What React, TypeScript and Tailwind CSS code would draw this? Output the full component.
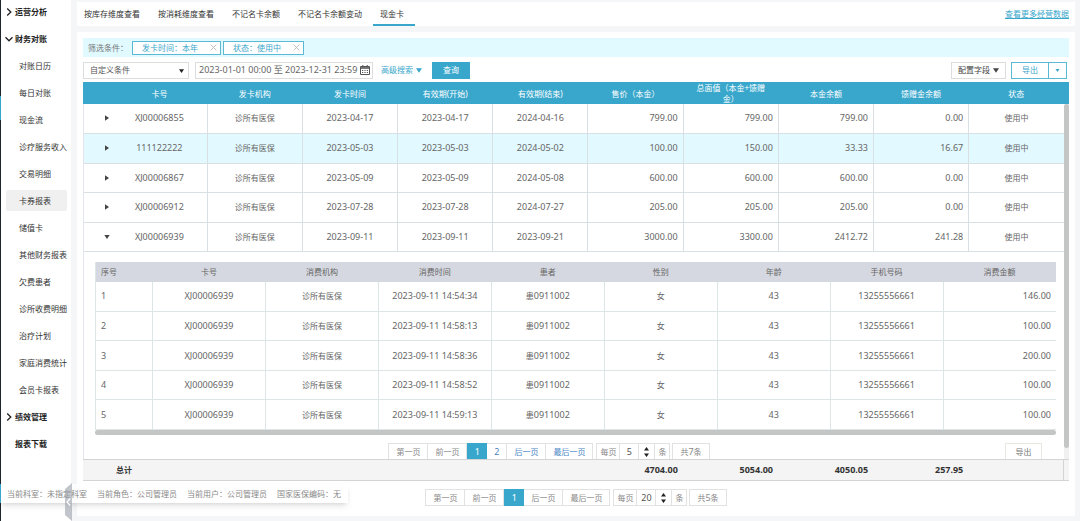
import React from "react";

interface CardRow {
  cardNo: string;
  issued: string;
  start: string;
  end: string;
  price: string;
  faceValue: string;
  principal: string;
  gift: string;
  active?: boolean;
  expanded?: boolean;
}

const cards: CardRow[] = [
  { cardNo: "XJ00006855", issued: "2023-04-17", start: "2023-04-17", end: "2024-04-16", price: "799.00", faceValue: "799.00", principal: "799.00", gift: "0.00" },
  { cardNo: "111122222", issued: "2023-05-03", start: "2023-05-03", end: "2024-05-02", price: "100.00", faceValue: "150.00", principal: "33.33", gift: "16.67", active: true },
  { cardNo: "XJ00006867", issued: "2023-05-09", start: "2023-05-09", end: "2024-05-08", price: "600.00", faceValue: "600.00", principal: "600.00", gift: "0.00" },
  { cardNo: "XJ00006912", issued: "2023-07-28", start: "2023-07-28", end: "2024-07-27", price: "205.00", faceValue: "205.00", principal: "205.00", gift: "0.00" },
  { cardNo: "XJ00006939", issued: "2023-09-11", start: "2023-09-11", end: "2023-09-21", price: "3000.00", faceValue: "3300.00", principal: "2412.72", gift: "241.28", expanded: true },
];

const records = [
  { time: "2023-09-11 14:54:34", amount: "146.00" },
  { time: "2023-09-11 14:58:13", amount: "100.00" },
  { time: "2023-09-11 14:58:36", amount: "200.00" },
  { time: "2023-09-11 14:58:52", amount: "100.00" },
  { time: "2023-09-11 14:59:13", amount: "100.00" },
];

const cardHeads = [
  "卡号",
  "发卡机构",
  "发卡时间",
  "有效期(开始)",
  "有效期(结束)",
  "售价（本金）",
  "总面值（本金+馈赠金）",
  "本金余额",
  "馈赠金余额",
  "状态",
];

const recordHeads = ["卡号", "消费机构", "消费时间", "患者", "性别", "年龄", "手机号码", "消费金额"];

const menu = [
  { title: "运营分析", arrow: "right", items: [] },
  {
    title: "财务对账",
    arrow: "down",
    items: [
      "对账日历",
      "每日对账",
      "现金流",
      "诊疗服务收入",
      "交易明细",
      "卡券报表",
      "储值卡",
      "其他财务报表",
      "欠费患者",
      "诊所收费明细",
      "治疗计划",
      "家庭消费统计",
      "会员卡报表",
    ],
  },
  { title: "绩效管理", arrow: "right", items: [] },
  { title: "报表下载", arrow: "", items: [] },
];

const tabs = ["按库存维度查看", "按消耗维度查看", "不记名卡余额", "不记名卡余额变动", "现金卡"];

function Caret({ className }: { className: string }) {
  return (
    <svg viewBox="0 0 8 6" className={className} fill="currentColor" aria-hidden="true">
      <path d="M0 0h8L4 6z" />
    </svg>
  );
}

function Chevron({ dir }: { dir: string }) {
  return (
    <svg viewBox="0 0 8 8" className="h-2 w-2" fill="none" stroke="#222" strokeWidth="1.3" aria-hidden="true">
      {dir === "right" ? <path d="M2.2 0.5 5.8 4 2.2 7.5" /> : <path d="M0.5 2.2 4 5.8 7.5 2.2" />}
    </svg>
  );
}

function Sidebar() {
  return (
    <nav className="flex w-[70px] shrink-0 flex-col gap-[6px] bg-white pt-px whitespace-nowrap">
      {menu.map((group) => (
        <div key={group.title} className="flex flex-col gap-[6px]">
          <button className="flex h-[21px] items-center gap-[2px] pl-1 text-left font-bold text-[#222]">
            <span className="flex w-2 justify-center">
              {group.arrow && <Chevron dir={group.arrow} />}
            </span>
            {group.title}
          </button>
          {group.items.map((item) => (
            <a
              key={item}
              href="#"
              className={`mr-1 ml-[5px] flex h-[21px] items-center rounded-xs pl-[13px] text-[#333] ${
                item === "卡券报表" ? "bg-[#f0f0f0]" : ""
              }`}
            >
              {item}
            </a>
          ))}
        </div>
      ))}
    </nav>
  );
}

function FilterTag({ text }: { text: string }) {
  return (
    <span className="flex h-[14px] items-center border border-[#5cb9d6] bg-white pr-[3px] pl-[9px] text-[#39a7cc]">
      {text}
      <button className="ml-3" aria-label={`移除 ${text}`}>
        <svg viewBox="0 0 7 7" className="h-[7px] w-[7px]" stroke="#bbb" strokeWidth="0.9" fill="none">
          <path d="M0.7 0.7l5.6 5.6M6.3 0.7L0.7 6.3" />
        </svg>
      </button>
    </span>
  );
}

function Toolbar() {
  return (
    <div className="mt-1 flex h-[18px] items-center">
      <div className="relative">
        <select
          aria-label="时间条件"
          className="h-[17px] w-[106px] appearance-none border border-[#ddd] bg-white pl-[6px] text-[#555]"
        >
          <option>自定义条件</option>
        </select>
        <Caret className="pointer-events-none absolute top-[7px] right-[5px] h-1 w-[5px] text-[#222]" />
      </div>
      <div className="ml-[6px] flex h-[17px] w-[178px] items-center border border-[#ddd] pl-[3px]">
        <input
          aria-label="发卡时间范围"
          className="min-w-0 flex-1 text-[9px] text-[#666]"
          defaultValue="2023-01-01 00:00 至 2023-12-31 23:59"
        />
        <svg viewBox="0 0 10 10" className="mr-[2px] h-[10px] w-[10px] shrink-0" fill="none" stroke="#555" aria-hidden="true">
          <path d="M0.5 1.5h9v8h-9z" />
          <path d="M0.5 3h9" strokeWidth="1.6" />
          <path d="M2.8 0v2.2M7.2 0v2.2" />
          <path d="M2 5.5h6M2 7.5h6" strokeDasharray="1.2 1.2" />
        </svg>
      </div>
      <button className="ml-2 flex items-center gap-[3px] text-[#39a7cc]">
        高级搜索
        <Caret className="h-[5px] w-[6px]" />
      </button>
      <button className="ml-[10px] h-[17px] w-[38px] bg-[#39a7cc] text-white">查询</button>
      <button className="ml-auto flex h-[17px] items-center gap-[3px] border border-[#ddd] px-[6px] text-[#444]">
        配置字段
        <Caret className="h-[5px] w-[6px]" />
      </button>
      <div className="mr-[2px] ml-[5px] flex h-[17px] border border-[#5cb9d6] text-[#39a7cc]">
        <button className="w-[36px]">导出</button>
        <button className="flex w-[18px] items-center justify-center border-l border-[#5cb9d6]" aria-label="更多导出">
          <Caret className="h-[3px] w-[5px]" />
        </button>
      </div>
    </div>
  );
}

interface PaginationProps {
  pages: number;
  size: string;
  total: string;
}

function Pagination({ pages, size, total }: PaginationProps) {
  const cell = "h-[17px] border-y border-r border-[#e2e2e2] px-[7px]";
  const next = pages > 1 ? "text-[#4a86c5]" : "text-[#888]";
  return (
    <div className="flex justify-center whitespace-nowrap text-[#888]">
      <button className={`${cell} border-l`}>第一页</button>
      <button className={cell}>前一页</button>
      <button className="h-[17px] w-5 bg-[#39a7cc] text-[9px] text-white">1</button>
      {pages > 1 && (
        <button className="h-[17px] w-5 border-y border-r border-[#e2e2e2] text-[9px] text-[#4a86c5]">2</button>
      )}
      <button className={`${cell} ${next}`}>后一页</button>
      <button className={`${cell} ${next}`}>最后一页</button>
      <label className="ml-[3px] flex h-[17px] items-center border border-[#e2e2e2]">
        <span className="px-[3px]">每页</span>
        <input
          className="h-full w-5 border-x border-[#e2e2e2] text-center text-[9px] text-[#555]"
          defaultValue={size}
        />
        <span className="flex h-full w-4 items-center justify-center border-r border-[#e2e2e2]">
          <svg viewBox="0 0 5 10" className="h-[10px] w-[5px]" fill="#222" aria-hidden="true">
            <path d="M2.5 0 5 3.5H0zM2.5 10 0 6.5h5z" />
          </svg>
        </span>
        <span className="px-[3px]">条</span>
      </label>
      <span className="ml-[2px] flex h-[17px] items-center border border-[#e2e2e2] px-[7px]">
        共<span className="text-[9px]">{total}</span>条
      </span>
    </div>
  );
}

// 展开行里的消费明细
function RecordDetail() {
  const td = "border-r border-[#dde6e6] text-center last:border-r-0";
  return (
    <div className="pt-[10px] pr-2 pl-[11px]">
      <table className="w-full table-fixed border-l border-[#dde6e6] text-[9px]">
        <thead>
          <tr className="h-5 bg-[#d5d8e0] text-[8px] text-[#666]">
            <th className="w-[57px] pl-[5px] text-left font-normal">序号</th>
            {recordHeads.map((head) => (
              <th key={head} className="font-normal">
                {head}
              </th>
            ))}
          </tr>
        </thead>
        <tbody>
          {records.map((record, i) => (
            <tr key={record.time} className="h-[30px] border-b border-[#dde6e6] even:h-[29px]">
              <td className="border-r border-[#dde6e6] pl-[5px]">{i + 1}</td>
              <td className={td}>XJ00006939</td>
              <td className={`${td} text-[8px]`}>诊所有医保</td>
              <td className={td}>{record.time}</td>
              <td className={td}>
                <span className="text-[8px]">患</span>0911002
              </td>
              <td className={`${td} text-[8px]`}>女</td>
              <td className={td}>43</td>
              <td className={td}>13255556661</td>
              <td className="pr-[5px] text-right">{record.amount}</td>
            </tr>
          ))}
        </tbody>
      </table>
      <div className="h-[5px] rounded-full bg-[#c4c6c6]" />
      <div className="mt-2 flex">
        <div className="flex-1">
          <Pagination pages={2} size="5" total="7" />
        </div>
        <button className="mr-[14px] ml-[2px] h-[18px] w-[37px] border border-[#e8e8e0] text-[#777]">导出</button>
      </div>
    </div>
  );
}

function CardTable() {
  const td = "border-r border-[#d9e0e4] text-center";
  const num = "border-r border-[#d9e0e4] pr-[5px] text-right";
  return (
    <div className="mt-[3px]">
      <div className="bg-[#39a7cc] pr-[5px]">
        <table className="w-full table-fixed text-white">
          <thead>
            <tr className="h-[22px] leading-[11px]">
              <th className="w-[29px]" aria-label="展开" />
              {cardHeads.map((head) => (
                <th key={head} className="px-2 font-normal">
                  {head}
                </th>
              ))}
            </tr>
          </thead>
        </table>
      </div>
      <div className="flex h-[355px] overflow-hidden">
        <div className="min-w-0 flex-1 border-l border-[#e3e6ea]">
          <table className="w-full table-fixed text-[9px]">
            <colgroup>
              <col className="w-7" />
              <col span={10} />
            </colgroup>
            <tbody>
              {cards.map((card) => (
                <tr
                  key={card.cardNo}
                  className={`h-[29px] border-b border-[#d9e0e4] even:h-[30px] ${card.active ? "bg-[#e2f9ff]" : ""}`}
                >
                  <td className="pr-[2px]">
                    <button className="ml-auto flex w-[6px] justify-center text-[#444]" aria-label="展开明细">
                      <Caret className={card.expanded ? "h-1 w-[6px]" : "h-1 w-[6px] -rotate-90"} />
                    </button>
                  </td>
                  <td className={td}>{card.cardNo}</td>
                  <td className={`${td} text-[8px]`}>诊所有医保</td>
                  <td className={td}>{card.issued}</td>
                  <td className={td}>{card.start}</td>
                  <td className={td}>{card.end}</td>
                  <td className={num}>{card.price}</td>
                  <td className={num}>{card.faceValue}</td>
                  <td className={num}>{card.principal}</td>
                  <td className={num}>{card.gift}</td>
                  <td className="text-center text-[8px]">使用中</td>
                </tr>
              ))}
            </tbody>
          </table>
          <RecordDetail />
        </div>
        <div className="w-[5px] bg-[#f1f1f1]">
          <div className="h-[344px] rounded-full bg-[#c4c6c6]" />
        </div>
      </div>
      <div className="border-y border-[#d4d4d4] bg-[#f4f4f4] pr-[5px]">
        <table className="w-full table-fixed border-r border-[#d4d4d4] text-[9px] font-bold text-[#333]">
          <tbody>
            <tr className="h-5">
              <td className="w-[29px]" />
              <td className="pl-1 text-[8px]">总计</td>
              <td colSpan={4} />
              <td className="pr-[5px] text-right">4704.00</td>
              <td className="pr-[5px] text-right">5054.00</td>
              <td className="pr-[5px] text-right">4050.05</td>
              <td className="pr-[5px] text-right">257.95</td>
              <td />
            </tr>
          </tbody>
        </table>
      </div>
    </div>
  );
}

export default function App() {
  return (
    <div className="relative flex min-h-screen bg-[#f5f6f8] font-['Noto_Sans','Noto_Sans_CJK_SC',sans-serif] text-[8px] leading-3 text-[#666]">
      <div className="flex w-px shrink-0 flex-col bg-[#1f2529]">
        <div className="mt-24 h-6 bg-[#39a7cc]" />
      </div>
      <Sidebar />
      <main className="flex min-w-0 flex-1 flex-col gap-[6px] pt-[2px] pr-[5px] pb-[5px] pl-[6px]">
        <div className="flex h-6 items-center bg-white pr-[6px]">
          {tabs.map((tab) => (
            <button
              key={tab}
              className={`h-full border-b-2 pt-[2px] pr-[11px] pl-[7px] text-[#333] ${
                tab === "现金卡" ? "border-[#39a7cc]" : "border-transparent"
              }`}
            >
              {tab}
            </button>
          ))}
          <a href="#" className="ml-auto text-[#39a7cc] underline underline-offset-1">
            查看更多经营数据
          </a>
        </div>
        <section className="flex-1 bg-white px-[6px] pt-[6px]">
          <div className="flex h-[19px] items-center gap-[2px] bg-[#e1faff] pl-[5px]">
            <span className="pr-[2px] text-[#777]">筛选条件：</span>
            <FilterTag text="发卡时间：本年" />
            <FilterTag text="状态：使用中" />
          </div>
          <Toolbar />
          <CardTable />
          <div className="mt-2">
            <Pagination pages={1} size="20" total="5" />
          </div>
        </section>
      </main>

      {/* 当前登录信息 */}
      <div className="absolute bottom-[18px] left-0 flex h-[19px] items-center gap-[10px] border-l border-[#39a7cc] bg-white/75 pr-[7px] pl-[6px] whitespace-nowrap text-[#888] shadow-md">
        <span>当前科室：未指定科室</span>
        <span>当前角色：公司管理员</span>
        <span>当前用户：公司管理员</span>
        <span>国家医保编码：无</span>
      </div>

      {/* 侧栏收起按钮 */}
      <button className="absolute bottom-0 left-[65px]" aria-label="收起菜单">
        <svg viewBox="0 0 7 38" className="h-[38px] w-[7px]">
          <path d="M7 0v38L0 32V6z" fill="#9a9fa8" fillOpacity="0.6" />
          <path d="M5.2 15.5 2 19l3.2 3.5" fill="none" stroke="#fff" strokeWidth="1.2" />
        </svg>
      </button>
    </div>
  );
}
